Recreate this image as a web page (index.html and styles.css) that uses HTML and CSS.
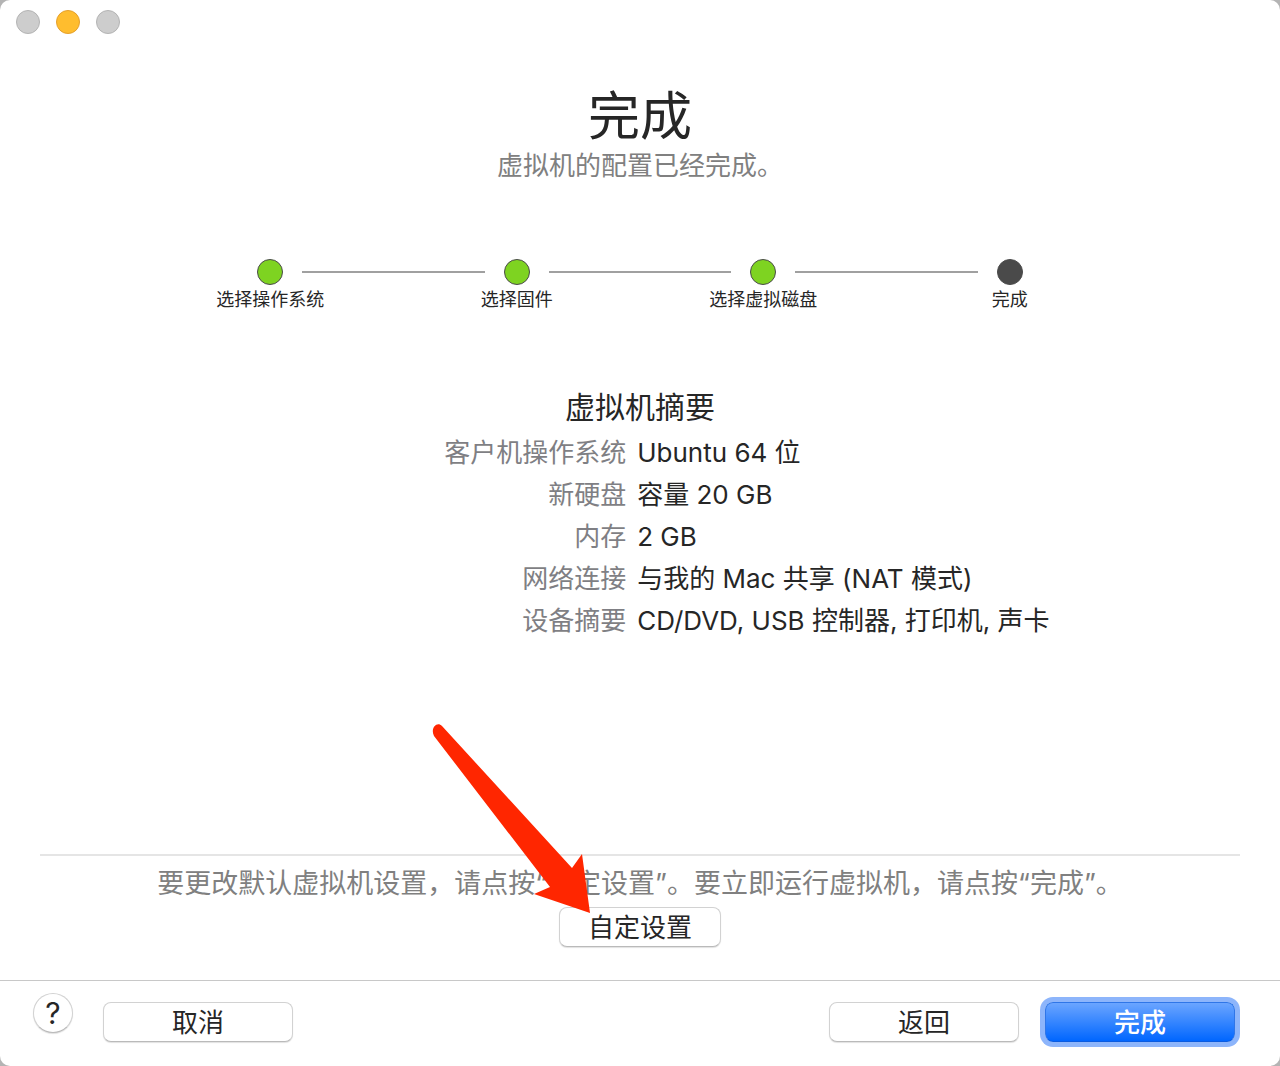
FILE: index.html
```
<!DOCTYPE html>
<html lang="zh-CN">
<head>
    <meta charset="UTF-8">
    <meta name="viewport" content="width=device-width, initial-scale=1.0">
    <title>完成</title>
    <link rel="stylesheet" href="styles.css">
</head>
<body>

<div class="window">
    <div class="titlebar">
        <button class="light" type="button" aria-label="关闭"></button>
        <button class="light minimize" type="button" aria-label="最小化"></button>
        <button class="light" type="button" aria-label="缩放"></button>
    </div>

    <main class="content">
        <h1>完成</h1>
        <p class="subtitle">虚拟机的配置已经完成。</p>

        <ol class="steps">
            <li class="step">
                <div class="track"><span class="dot"></span></div>
                选择操作系统
            </li>
            <li class="step">
                <div class="track"><span class="dot"></span></div>
                选择固件
            </li>
            <li class="step">
                <div class="track"><span class="dot"></span></div>
                选择虚拟磁盘
            </li>
            <li class="step">
                <div class="track"><span class="dot current"></span></div>
                完成
            </li>
        </ol>

        <h2>虚拟机摘要</h2>
        <table class="summary">
            <tr><th scope="row">客户机操作系统</th><td>Ubuntu 64 位</td></tr>
            <tr><th scope="row">新硬盘</th><td>容量 20 GB</td></tr>
            <tr><th scope="row">内存</th><td>2 GB</td></tr>
            <tr><th scope="row">网络连接</th><td>与我的 Mac 共享 (NAT 模式)</td></tr>
            <tr><th scope="row">设备摘要</th><td>CD/DVD, USB 控制器, 打印机, 声卡</td></tr>
        </table>
    </main>

    <section class="customize">
        <p class="hint">要更改默认虚拟机设置，请点按“自定设置”。要立即运行虚拟机，请点按“完成”。</p>
        <button class="btn btn-custom" type="button">自定设置</button>
        <svg class="arrow" width="160" height="192" viewBox="0 0 160 192" aria-hidden="true">
            <path d="M10 3 L140 145 L150 131 L158 190 L102 171 L118 164 L2 13 C-2 5 5 -2 10 3 Z" fill="#ff2600"/>
        </svg>
    </section>

    <footer class="footer">
        <button class="help" type="button" aria-label="帮助">?</button>
        <button class="btn" type="button">取消</button>
        <button class="btn btn-back" type="button">返回</button>
        <button class="btn btn-primary" type="button">完成</button>
    </footer>
</div>

</body>
</html>
```

FILE: styles.css
```
* {
    box-sizing: border-box;
}

body {
    margin: 0;
    background-color: #b4b4b4;
    color: #262626;
    font-family: Inter, "Noto Sans CJK SC", sans-serif;
    font-size: 26px;
    line-height: 42px;
}

button {
    font-family: inherit;
    color: inherit;
    padding: 0;
}

.window {
    display: flex;
    flex-direction: column;
    min-height: 100vh;
    background-color: #fff;
    border-radius: 10px;
}

.titlebar {
    display: flex;
    gap: 16px;
    padding: 10px 16px;
}

.light {
    width: 24px;
    height: 24px;
    border: 1px solid #b4b4b4;
    border-radius: 50%;
    background-color: #cdcdcd;
}

.minimize {
    border-color: #e5a02c;
    background-color: #ffbd2e;
}

.content {
    flex: 1;
    padding-top: 43px;
}

h1 {
    margin: 0;
    font-size: 52px;
    font-weight: 400;
    line-height: 60px;
    text-align: center;
}

.subtitle {
    margin: 0;
    color: #808080;
    line-height: 38px;
    text-align: center;
}

.steps {
    display: flex;
    margin: 0;
    padding: 74px 147px 0;
    list-style: none;
}

.step {
    flex: 1;
    font-size: 18px;
    line-height: 30px;
    text-align: center;
}

.track {
    display: flex;
    align-items: center;
    gap: 19px;
}

/* half of the connecting line on each side of the dot */
.track::before,
.track::after {
    content: "";
    flex: 1;
    height: 2px;
    background-color: #a0a0a0;
}

.step:first-child .track::before,
.step:last-child .track::after {
    visibility: hidden;
}

.dot {
    width: 26px;
    height: 26px;
    border: 1px solid #4a4a4a;
    border-radius: 50%;
    background-color: #7ed321;
}

.current {
    background-color: #4a4a4a;
}

h2 {
    margin: 67px 0 0;
    font-size: 30px;
    font-weight: 400;
    line-height: 50px;
    text-align: center;
}

.summary {
    width: 100%;
    border-collapse: collapse;
    table-layout: fixed;
}

.summary th {
    width: 49%;
    padding: 0 1px 0 0;
    color: #7f7f84;
    font-weight: 400;
    text-align: right;
}

.summary td {
    padding: 0 0 0 10px;
}

.customize {
    position: relative;
    margin: 0 40px;
    padding-bottom: 33px;
    border-top: 2px solid #e5e5e5;
    text-align: center;
}

.hint {
    margin: 0;
    padding: 7px 0 2px;
    color: #808080;
    font-size: 27px;
}

.btn {
    width: 190px;
    height: 40px;
    padding-top: 2px;
    border: 1px solid #d2d2d2;
    border-bottom-color: #bababa;
    border-radius: 8px;
    background-color: #fff;
    box-shadow: 0 1px 1px rgba(0, 0, 0, 0.12);
    font-size: 26px;
    line-height: 36px;
}

.btn-custom {
    display: block;
    width: 162px;
    margin: 0 auto;
}

/* points at the customize button */
.arrow {
    position: absolute;
    right: 50%;
    bottom: 65px;
    margin-right: 48px;
}

.footer {
    display: flex;
    align-items: flex-end;
    padding: 12px 45px 24px 33px;
    border-top: 1px solid #c8c8c8;
}

.help {
    width: 40px;
    height: 40px;
    margin: 0 30px 9px 0;
    border: 1px solid #d2d2d2;
    border-bottom-color: #bababa;
    border-radius: 50%;
    background-color: #fff;
    box-shadow: 0 1px 1px rgba(0, 0, 0, 0.12);
    font-size: 30px;
    line-height: 38px;
}

.btn-back {
    margin-left: auto;
}

.btn-primary {
    margin-left: 26px;
    border-color: #2f76e8;
    border-bottom-color: #0a5be0;
    background: linear-gradient(#6ba5ff, #0066ff);
    box-shadow: 0 0 0 5px #8db5fb;
    color: #fff;
    font-weight: 500;
}
```
